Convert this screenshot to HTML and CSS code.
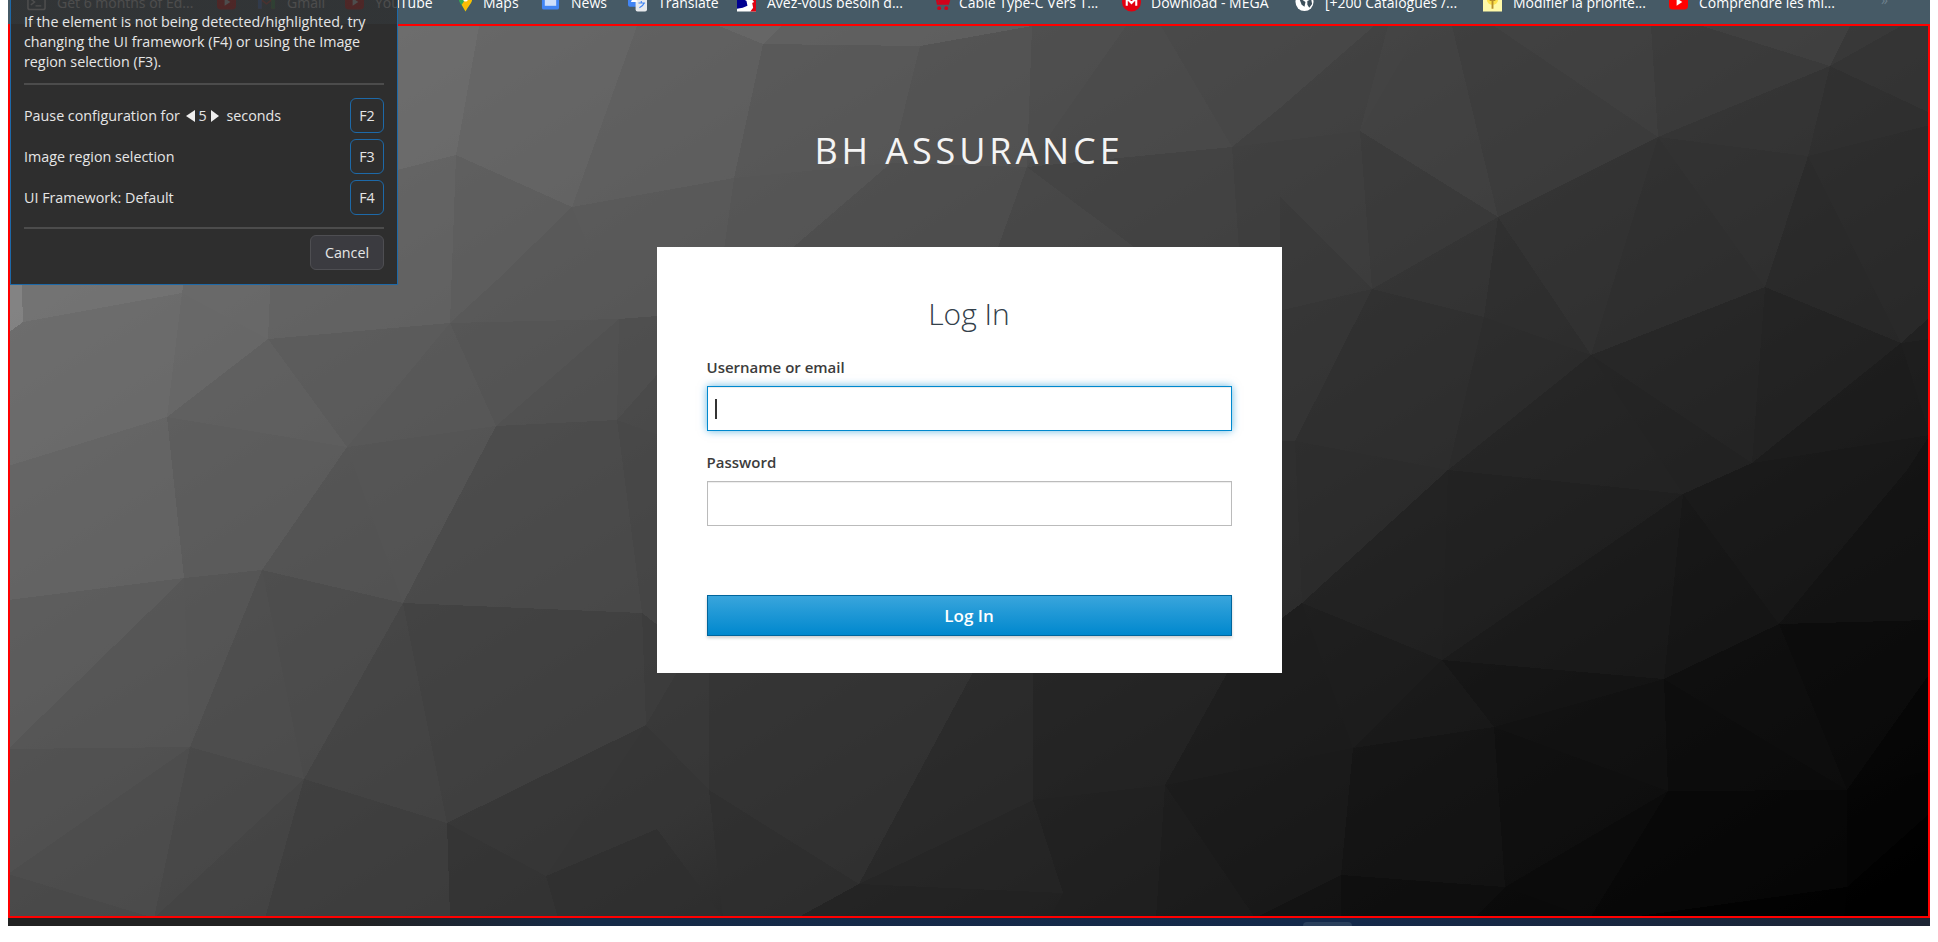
FILE: index.html
```html
<!DOCTYPE html>
<html lang="en">
<head>
<meta charset="utf-8">
<title>BH ASSURANCE - Log In</title>
<link rel="stylesheet" href="styles.css">
</head>
<body>
<div class="browser">
  <nav class="bookmarks">
    <a class="bm"><svg class="ic" viewBox="0 0 20 20"><rect x="1" y="2" width="18" height="16" rx="2" fill="none" stroke="#fff" stroke-width="1.6"/><path d="M4 7l4 3-4 3M9 14h6" fill="none" stroke="#fff" stroke-width="1.4"/></svg><span>Get 6 months of Ed...</span></a>
    <a class="bm"><svg class="ic" viewBox="0 0 20 20"><rect y="2" width="20" height="16" rx="4" fill="#f00"/><path d="M8 6l6 4-6 4z" fill="#fff"/></svg></a>
    <a class="bm"><svg class="ic" viewBox="0 0 20 20"><path d="M1 17V4l9 7 9-7v13h-4V9l-5 4-5-4v8z" fill="#ea4335"/><path d="M1 17V4l4 3v10z" fill="#4285f4"/><path d="M19 17V4l-4 3v10z" fill="#34a853"/></svg><span>Gmail</span></a>
    <a class="bm"><svg class="ic" viewBox="0 0 20 20"><rect y="2" width="20" height="16" rx="4" fill="#f00"/><path d="M8 6l6 4-6 4z" fill="#fff"/></svg><span>YouTube</span></a>
    <a class="bm"><svg class="ic" viewBox="0 0 20 20"><path d="M10 20C7 14 3 11 3 7a7 7 0 0 1 14 0c0 4-4 7-7 13z" fill="#34a853"/><path d="M3 7a7 7 0 0 1 7-7v7z" fill="#ea4335"/><path d="M10 0a7 7 0 0 1 7 7h-7z" fill="#4285f4"/><path d="M6 13l4-6h7c0 4-4 7-7 13z" fill="#fbbc04"/><circle cx="10" cy="7" r="2.5" fill="#fff"/></svg><span>Maps</span></a>
    <a class="bm"><svg class="ic" viewBox="0 0 20 20"><rect x="3" y="0" width="14" height="8" rx="2" fill="#fbbc04"/><rect x="1" y="3" width="18" height="15" rx="2" fill="#4285f4"/><rect x="4" y="7" width="12" height="7" fill="#cfe0fb"/></svg><span>News</span></a>
    <a class="bm"><svg class="ic" viewBox="0 0 20 20"><rect x="0" y="0" width="13" height="15" rx="2" fill="#4285f4"/><rect x="8" y="5" width="12" height="15" rx="2" fill="#e8eaed"/><path d="M3 10l3.500-7 3.500 7z" fill="#fff"/><path d="M11 11h7M14 9v2M17 11c-1 3-3 4-5 5" fill="none" stroke="#4285f4" stroke-width="1.200"/></svg><span>Translate</span></a>
    <a class="bm"><svg class="ic" viewBox="0 0 20 20"><rect width="20" height="20" fill="#fff"/><path d="M0 4h8L7 7l3 2 1 5-5 2-6 1z" fill="#000091"/><path d="M15 2h5v18h-6l3-4-1-5 2-1-4-5z" fill="#e1000f"/></svg><span>Avez-vous besoin d...</span></a>
    <a class="bm"><svg class="ic" viewBox="0 0 20 20"><path d="M1 2h3l2 10h11l2-7H5" fill="none" stroke="#d0021b" stroke-width="2"/><path d="M6 6h12l-1 5H7z" fill="#d0021b"/><circle cx="7.500" cy="16.500" r="2" fill="#d0021b"/><circle cx="15" cy="16.500" r="2" fill="#d0021b"/></svg><span>Câble Type-C Vers T...</span></a>
    <a class="bm"><svg class="ic" viewBox="0 0 20 20"><circle cx="10" cy="10" r="10" fill="#e3000f"/><path d="M5 14V6l5 5 5-5v8" fill="none" stroke="#fff" stroke-width="2.200"/></svg><span>Download - MEGA</span></a>
    <a class="bm"><svg class="ic" viewBox="0 0 20 20"><circle cx="10" cy="10" r="9.500" fill="#fff"/><path d="M4 5l5-2 1 3-2 2 3 2-1 5-3-2zM13 9l4-2 1 5-3 4-2-3z" fill="#3d4f5b"/></svg><span>[+200 Catalogues /...</span></a>
    <a class="bm"><svg class="ic" viewBox="0 0 20 20"><rect width="20" height="20" fill="#fff9a8"/><circle cx="10" cy="7" r="6" fill="#ffe34d"/><path d="M10 3v14M7 8h6" stroke="#b9902a" stroke-width="2" fill="none"/></svg><span>Modifier la priorité...</span></a>
    <a class="bm"><svg class="ic" viewBox="0 0 20 20"><rect y="2" width="20" height="16" rx="4" fill="#f00"/><path d="M8 6l6 4-6 4z" fill="#fff"/></svg><span>Comprendre les mi...</span></a>
    <span class="more">»</span>
  </nav>

  <main class="page">
    <svg class="mesh" viewBox="8 24 1922 894" preserveAspectRatio="none" shape-rendering="crispEdges">
      <polygon fill="#8a8a8a" points="8,200 19,200 23,322 8,333"/>
      <polygon fill="#757575" points="19,200 200,200 182,293 23,322"/>
      <polygon fill="#6a6a6a" points="200,200 274,200 268,339 182,293"/>
      <polygon fill="#636363" points="274,200 397,170 456,155 450,323 268,339"/>
      <polygon fill="#6c6c6c" points="397,26 479,26 456,155 397,170"/>
      <polygon fill="#5d5d5d" points="456,155 572,207 497,280 450,323"/>
      <polygon fill="#656565" points="479,26 637,26 572,207 456,155"/>
      <polygon fill="#5f5f5f" points="637,26 719,26 763,44 734,178 572,207"/>
      <polygon fill="#686868" points="719,26 782,26 763,44"/>
      <polygon fill="#606060" points="782,26 1032,26 920,46 763,44"/>
      <polygon fill="#575757" points="763,44 920,46 891,163 734,178"/>
      <polygon fill="#525252" points="920,46 1032,26 1027,167 891,163"/>
      <polygon fill="#4c4c4c" points="1032,26 1126,26 1027,167"/>
      <polygon fill="#494949" points="1126,26 1161,26 1232,147 1027,167"/>
      <polygon fill="#464646" points="1161,26 1374,26 1280,108 1232,147"/>
      <polygon fill="#3f3f3f" points="1374,26 1388,26 1360,131 1280,141 1232,147 1280,108"/>
      <polygon fill="#424242" points="1388,26 1421,26 1360,131"/>
      <polygon fill="#414141" points="1421,26 1452,26 1498,217 1360,131"/>
      <polygon fill="#3c3c3c" points="1452,26 1494,26 1658,137 1498,217"/>
      <polygon fill="#404040" points="1494,26 1651,26 1658,137"/>
      <polygon fill="#3b3b3b" points="1651,26 1702,26 1830,66 1658,137"/>
      <polygon fill="#424242" points="1702,26 1850,26 1830,66"/>
      <polygon fill="#393939" points="1850,26 1901,26 1830,66"/>
      <polygon fill="#343434" points="1901,26 1930,26 1930,113 1830,66"/>
      <polygon fill="#2f2f2f" points="1830,66 1930,113 1930,125 1808,156"/>
      <polygon fill="#343434" points="1658,137 1830,66 1808,156"/>
      <polygon fill="#313131" points="1658,137 1808,156 1765,287"/>
      <polygon fill="#2c2c2c" points="1808,156 1930,125 1930,220 1901,343"/>
      <polygon fill="#2a2a2a" points="1808,156 1901,343 1765,287"/>
      <polygon fill="#2c2c2c" points="1930,220 1930,317 1901,343"/>
      <polygon fill="#222222" points="1930,317 1930,339 1901,343"/>
      <polygon fill="#323232" points="1498,217 1658,137 1591,355"/>
      <polygon fill="#2f2f2f" points="1658,137 1765,287 1591,355"/>
      <polygon fill="#2d2d2d" points="1498,217 1591,355 1484,317"/>
      <polygon fill="#333333" points="1372,289 1498,217 1484,317"/>
      <polygon fill="#393939" points="1360,131 1498,217 1372,289"/>
      <polygon fill="#3d3d3d" points="1232,147 1360,131 1372,289 1280,313 1239,250"/>
      <polygon fill="#383838" points="1280,197 1372,289 1280,313"/>
      <polygon fill="#595959" points="572,207 734,178 724,250 590,250"/>
      <polygon fill="#555555" points="734,178 891,163 790,250 724,250"/>
      <polygon fill="#4d4d4d" points="891,163 1027,167 997,250 790,250"/>
      <polygon fill="#464646" points="1027,167 1138,250 997,250"/>
      <polygon fill="#414141" points="1027,167 1232,147 1239,250 1138,250"/>
      <polygon fill="#343434" points="1270,313 1372,289 1295,441 1270,441"/>
      <polygon fill="#2e2e2e" points="1372,289 1484,317 1448,470 1295,441"/>
      <polygon fill="#2b2b2b" points="1484,317 1591,355 1448,470"/>
      <polygon fill="#242424" points="1448,470 1591,355 1683,494"/>
      <polygon fill="#262626" points="1591,355 1765,287 1752,463"/>
      <polygon fill="#232323" points="1591,355 1752,463 1683,494"/>
      <polygon fill="#232323" points="1765,287 1901,343 1752,463"/>
      <polygon fill="#1c1c1c" points="1901,343 1930,435 1752,463"/>
      <polygon fill="#1e1e1e" points="1901,343 1930,339 1930,435"/>
      <polygon fill="#191919" points="1752,463 1930,435 1907,470 1779,624 1683,494"/>
      <polygon fill="#131313" points="1907,470 1930,435 1930,620 1779,624"/>
      <polygon fill="#161616" points="1683,494 1779,624 1664,679"/>
      <polygon fill="#1a1a1a" points="1442,660 1683,494 1664,679"/>
      <polygon fill="#202020" points="1448,470 1683,494 1442,660"/>
      <polygon fill="#2c2c2c" points="1295,441 1448,470 1302,603"/>
      <polygon fill="#2e2e2e" points="1270,441 1295,441 1302,603 1270,640"/>
      <polygon fill="#212121" points="1302,603 1448,470 1442,660"/>
      <polygon fill="#1c1c1c" points="1302,603 1442,660 1353,748"/>
      <polygon fill="#141414" points="1442,660 1664,679 1494,727"/>
      <polygon fill="#191919" points="1442,660 1494,727 1353,748"/>
      <polygon fill="#0c0c0c" points="1664,679 1847,790 1668,791"/>
      <polygon fill="#0e0e0e" points="1664,679 1779,624 1847,790"/>
      <polygon fill="#0b0b0b" points="1779,624 1930,620 1930,673 1847,790"/>
      <polygon fill="#050505" points="1930,673 1930,770 1847,790"/>
      <polygon fill="#111111" points="1494,727 1664,679 1668,791"/>
      <polygon fill="#141414" points="1353,748 1494,727 1505,887 1341,875"/>
      <polygon fill="#0f0f0f" points="1494,727 1668,791 1505,887"/>
      <polygon fill="#0b0b0b" points="1505,887 1668,791 1590,918"/>
      <polygon fill="#070707" points="1668,791 1847,790 1847,887 1624,918 1590,918"/>
      <polygon fill="#040404" points="1847,790 1930,770 1930,813 1847,887"/>
      <polygon fill="#000000" points="1847,887 1930,813 1930,918 1844,918"/>
      <polygon fill="#010101" points="1624,918 1847,887 1844,918"/>
      <polygon fill="#0a0a0a" points="1505,887 1590,918 1475,918"/>
      <polygon fill="#0e0e0e" points="1341,875 1505,887 1475,918 1341,918"/>
      <polygon fill="#1b1b1b" points="1240,650 1302,603 1353,748 1240,770"/>
      <polygon fill="#3c3c3c" points="642,613 690,650 646,725"/>
      <polygon fill="#383838" points="690,650 709,650 709,790 646,725"/>
      <polygon fill="#333333" points="709,650 985,650 859,884 709,790"/>
      <polygon fill="#2a2a2a" points="985,650 1033,650 1033,800 859,884"/>
      <polygon fill="#232323" points="1033,650 1240,650 1165,785 1033,800"/>
      <polygon fill="#1c1c1c" points="1240,650 1240,770 1165,785"/>
      <polygon fill="#1a1a1a" points="1165,785 1240,770 1353,748 1341,875 1255,918"/>
      <polygon fill="#131313" points="1255,918 1341,875 1341,918"/>
      <polygon fill="#1d1d1d" points="1165,785 1255,918 1156,918"/>
      <polygon fill="#212121" points="1033,800 1165,785 1156,918 1050,918"/>
      <polygon fill="#262626" points="859,884 1063,893 1033,800"/>
      <polygon fill="#232323" points="859,884 1063,893 1050,918 797,918"/>
      <polygon fill="#2f2f2f" points="709,790 859,884 797,918 723,918"/>
      <polygon fill="#353535" points="546,876 646,725 709,790 657,829"/>
      <polygon fill="#2f2f2f" points="546,876 657,829 723,918 558,918"/>
      <polygon fill="#363636" points="447,823 646,725 546,876"/>
      <polygon fill="#333333" points="447,823 546,876 558,918 450,918"/>
      <polygon fill="#3e3e3e" points="265,918 304,779 447,823 450,918"/>
      <polygon fill="#494949" points="190,747 304,779 154,918"/>
      <polygon fill="#454545" points="304,779 265,918 154,918"/>
      <polygon fill="#525252" points="8,749 190,747 8,874"/>
      <polygon fill="#4e4e4e" points="8,874 190,747 154,918"/>
      <polygon fill="#4a4a4a" points="8,874 154,918 8,918"/>
      <polygon fill="#5e5e5e" points="8,600 184,578 8,749"/>
      <polygon fill="#575757" points="8,749 184,578 190,747"/>
      <polygon fill="#565656" points="184,578 262,570 190,747"/>
      <polygon fill="#4c4c4c" points="262,570 403,603 304,779"/>
      <polygon fill="#4e4e4e" points="262,570 304,779 190,747"/>
      <polygon fill="#444444" points="403,603 447,823 304,779"/>
      <polygon fill="#404040" points="403,603 642,613 646,725 447,823"/>
      <polygon fill="#666666" points="167,417 184,578 8,600 8,466"/>
      <polygon fill="#5d5d5d" points="167,417 347,447 262,570 184,578"/>
      <polygon fill="#545454" points="347,447 403,603 262,570"/>
      <polygon fill="#555555" points="347,447 496,426 403,603"/>
      <polygon fill="#4a4a4a" points="496,426 617,420 642,613 403,603"/>
      <polygon fill="#464646" points="617,420 670,439 690,650 642,613"/>
      <polygon fill="#6d6d6d" points="23,322 182,293 167,417 8,466 8,333"/>
      <polygon fill="#696969" points="182,293 268,339 167,417"/>
      <polygon fill="#606060" points="268,339 347,447 167,417"/>
      <polygon fill="#5b5b5b" points="268,339 450,323 347,447"/>
      <polygon fill="#585858" points="450,323 496,426 347,447"/>
      <polygon fill="#545454" points="450,323 619,319 496,426"/>
      <polygon fill="#505050" points="619,319 617,420 496,426"/>
      <polygon fill="#4d4d4d" points="619,319 670,315 670,360 617,420"/>
      <polygon fill="#484848" points="617,420 670,360 670,439"/>
      <polygon fill="#585858" points="497,280 572,207 590,250 670,250 670,315 619,319 450,323"/>
    </svg>

    <h1 class="brand">BH ASSURANCE</h1>

    <section class="card">
      <h2 class="card-title">Log In</h2>
      <form class="form">
        <div class="label">Username or email</div>
        <div class="input focused"><span class="caret"></span></div>
        <div class="label second">Password</div>
        <div class="input"></div>
        <button class="submit" type="button">Log In</button>
      </form>
    </section>

    <div class="selection"></div>
  </main>

  <footer class="strip"><span class="tab"></span></footer>

  <aside class="panel">
    <p class="hint">If the element is not being detected/highlighted, try changing the UI framework (F4) or using the Image region selection (F3).</p>
    <hr class="rule first">
    <div class="rows">
      <div class="row">
        <span class="pause">Pause configuration for <i class="tri left"></i><b>5</b><i class="tri right"></i> seconds</span>
        <span class="key">F2</span>
      </div>
      <div class="row"><span>Image region selection</span><span class="key">F3</span></div>
      <div class="row"><span>UI Framework: Default</span><span class="key">F4</span></div>
    </div>
    <hr class="rule last">
    <div class="actions"><span class="cancel">Cancel</span></div>
  </aside>
</div>
</body>
</html>
```
FILE: styles.css
```css
* { box-sizing: border-box; }
html, body { margin: 0; padding: 0; height: 942px; overflow: hidden; background: #fff; }
body { font-family: "Open Sans", "Noto Sans", sans-serif; }

.browser {
  position: relative;
  margin-left: 8px;
  width: 1922px;
  height: 926px;
  display: flex;
  flex-direction: column;
}

/* bookmarks bar, cropped by the top of the screenshot */
.bookmarks {
  flex: 0 0 24px;
  background: #465a66;
  overflow: hidden;
  padding-left: 19px;
  display: grid;
  grid-template-columns: 190px 40px 88px 111px 85px 87px 109px 195px 190px 173px 188px 186px 212px auto;
  align-items: start;
}
.bm {
  display: flex;
  align-items: center;
  gap: 11px;
  height: 20px;
  margin-top: -8px;
  color: #fff;
  font-size: 14px;
  white-space: nowrap;
}
.bm:nth-child(5), .bm:nth-child(9) { gap: 8px; }
.bm:nth-child(10) { gap: 10px; }
.ic { flex: 0 0 19px; width: 19px; height: 20px; }
.more { color: #6d808c; font-size: 14px; margin-top: -10px; }

/* login page */
.page {
  position: relative;
  flex: 1;
  display: flex;
  flex-direction: column;
  align-items: center;
  background: linear-gradient(148deg, #808080 0, #666 20%, #4a4a4a 42%, #323232 60%, #141414 80%, #000 100%);
  overflow: hidden;
}
.mesh { position: absolute; inset: 0; width: 100%; height: 100%; opacity: .75; }
.brand {
  position: relative;
  margin: 100px 0 0;
  height: 54px;
  font-size: 36px;
  line-height: 54px;
  font-weight: 400;
  letter-spacing: 3.900px;
  color: #f4f4f4;
}
.card {
  position: relative;
  margin-top: 69px;
  width: 625px;
  height: 426px;
  background: #fff;
  padding: 0 50px;
  color: #333;
}
.card-title {
  margin: 46px 0 0;
  text-align: center;
  font-size: 30px;
  line-height: 42px;
  font-weight: 300;
  color: #33404a;
}
.form { display: flex; flex-direction: column; }
.label {
  margin-top: 22px;
  font-size: 15px;
  line-height: 20px;
  font-weight: 600;
  color: #3c3c3c;
}
.label.second { margin-top: 21px; }
.input {
  margin-top: 9px;
  height: 45px;
  background: #fff;
  border: 1px solid #bbb;
  box-shadow: inset 0 1px 1px rgba(3, 3, 3, .075);
  display: flex;
  align-items: center;
  padding-left: 7px;
}
.input.focused {
  border-color: #0088ce;
  box-shadow: inset 0 1px 1px rgba(3, 3, 3, .075), 0 0 8px rgba(0, 136, 206, .6);
}
.caret { width: 2px; height: 20px; background: #333; }
.submit {
  margin-top: 69px;
  height: 41px;
  border: 1px solid #00659c;
  background: linear-gradient(#39a5dc, #0088ce);
  box-shadow: 0 2px 3px rgba(3, 3, 3, .2);
  color: #fff;
  font: 600 17px "Open Sans", sans-serif;
}

.selection {
  position: absolute;
  inset: 0;
  border: 2px solid #f00;
}

.strip {
  flex: 0 0 8px;
  background: linear-gradient(90deg, #222 0, #222 18%, #152a47 30%, #14294a 70%, #1c2433 100%);
  overflow: hidden;
}
.tab {
  display: block;
  margin: 4px 0 0 1295px;
  width: 49px;
  height: 6px;
  background: #2a3f5c;
  border-radius: 4px 4px 0 0;
}

/* floating overlay */
.panel {
  position: absolute;
  top: 0;
  left: 2px;
  width: 388px;
  height: 285px;
  padding: 12px 13px 0 13px;
  background: linear-gradient(rgba(46, 46, 46, .85) 24px, #2e2e2e 24px);
  border: 1px solid #1d69a8;
  border-top: 0;
  color: #e6e6e6;
  font-size: 14.300px;
  line-height: 20px;
}
.hint { margin: 0; }
.rule { margin: 0; border: 0; height: 2px; background: #4c4c4c; }
.rule.first { margin-top: 11px; }
.rule.last { margin-top: 12px; }
.rows { margin-top: 13px; display: flex; flex-direction: column; gap: 6px; }
.row { display: flex; justify-content: space-between; align-items: center; height: 35px; }
.pause { display: flex; align-items: center; white-space: pre; }
.pause b { font-weight: 400; margin: 0 4px; }
.tri { width: 0; height: 0; border-top: 6px solid transparent; border-bottom: 6px solid transparent; }
.tri.left { border-right: 9px solid #eee; margin-left: 2px; }
.tri.right { border-left: 8px solid #eee; margin-right: 4px; }
.key {
  width: 34px;
  height: 35px;
  border: 1px solid #1d69a8;
  border-radius: 6px;
  display: flex;
  align-items: center;
  justify-content: center;
}
.actions { margin-top: 6px; display: flex; justify-content: flex-end; }
.cancel {
  width: 74px;
  height: 35px;
  background: #3b3b40;
  border: 1px solid #4e4e52;
  border-radius: 6px;
  display: flex;
  align-items: center;
  justify-content: center;
}
```
